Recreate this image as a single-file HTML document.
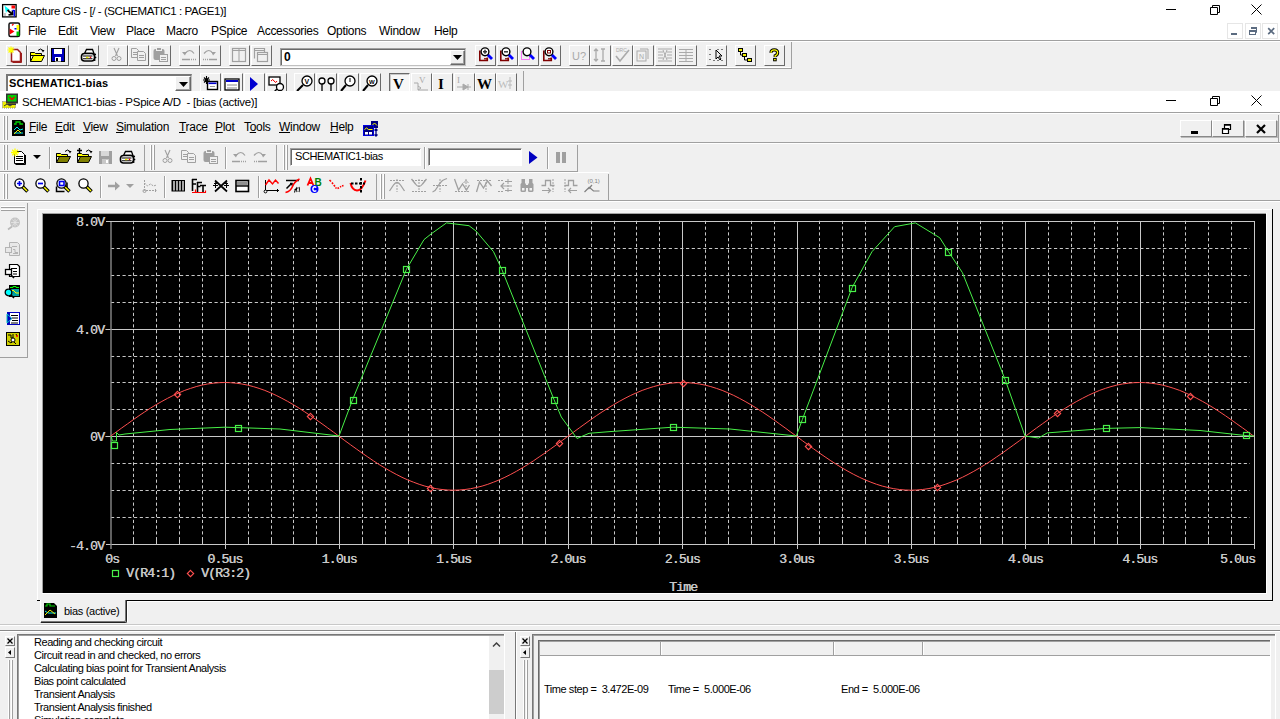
<!DOCTYPE html><html><head><meta charset="utf-8"><style>
*{margin:0;padding:0;box-sizing:border-box}
body{width:1280px;height:719px;overflow:hidden;background:#f0f0f0;position:relative;font-family:"Liberation Sans",sans-serif;font-size:12px;color:#000}
.a{position:absolute}
.t{position:absolute;white-space:pre;line-height:1}
.b{position:absolute;width:21px;height:21px;border-top:1px solid #fff;border-left:1px solid #fff;border-right:1px solid #6a6a6a;border-bottom:1px solid #6a6a6a}
.h{position:absolute;height:1px}
.v{position:absolute;width:1px}
.mono{font-family:"Liberation Mono",monospace}
svg{position:absolute;overflow:visible}
</style></head><body>

<div class="a" style="left:0px;top:0px;width:1280px;height:40px;background:#fff;"></div>
<div class="t" style="left:22px;top:6px;font-size:11.5px;letter-spacing:-0.43px">Capture CIS - [/ - (SCHEMATIC1 : PAGE1)]</div>
<div class="h" style="left:1166px;top:9px;width:10px;background:#000"></div>
<svg style="left:1208px;top:4px" width="12" height="12"><path d="M2.5 3.5h7v7h-7z M4.5 3.5v-2h7v7h-2" fill="none" stroke="#000"/></svg>
<svg style="left:1251px;top:4px" width="11" height="11"><path d="M0.5 0.5L10.5 10.5M10.5 0.5L0.5 10.5" stroke="#000"/></svg>
<svg style="left:2px;top:4px" width="16" height="14"><rect x="0.6" y="0.6" width="13.5" height="12.3" fill="#fff" stroke="#000" stroke-width="1.3"/><path d="M2.5 1.5l5.5 4.5h-2.5l-1.5 3z" fill="#0ff"/><path d="M5.5 6l5 4.5M6.5 10.8l4.2-0.3l-0.3-4" stroke="#000" stroke-width="1.7" fill="none"/><rect x="9.5" y="1.5" width="3.5" height="3" fill="#f00"/><path d="M12.3 6v6.5M10.5 6.5h2" stroke="#00f" stroke-width="1.4"/><rect x="2" y="9" width="2" height="3" fill="#c8c8c8"/></svg>
<svg style="left:8px;top:22px" width="13" height="16"><rect x="1" y="1" width="10.5" height="13.5" rx="1.5" fill="#fff" stroke="#111" stroke-width="1.5"/><path d="M1.7 6.5l4.8 3l-4.8 3z" fill="#f00"/><rect x="8.5" y="3" width="2.8" height="5" fill="#ff0"/><rect x="8.5" y="9.5" width="2.8" height="4.5" fill="#0c0"/><rect x="6.5" y="6" width="2" height="1.5" fill="#00f"/><path d="M4 3.5l1.5-1.5" stroke="#f00" stroke-width="1.2"/></svg>
<div class="t" style="left:28px;top:25px;font-size:12px;letter-spacing:-0.3px">File</div>
<div class="t" style="left:58px;top:25px;font-size:12px;letter-spacing:-0.3px">Edit</div>
<div class="t" style="left:90px;top:25px;font-size:12px;letter-spacing:-0.3px">View</div>
<div class="t" style="left:126px;top:25px;font-size:12px;letter-spacing:-0.3px">Place</div>
<div class="t" style="left:166px;top:25px;font-size:12px;letter-spacing:-0.3px">Macro</div>
<div class="t" style="left:211px;top:25px;font-size:12px;letter-spacing:-0.3px">PSpice</div>
<div class="t" style="left:257px;top:25px;font-size:12px;letter-spacing:-0.3px">Accessories</div>
<div class="t" style="left:327px;top:25px;font-size:12px;letter-spacing:-0.3px">Options</div>
<div class="t" style="left:379px;top:25px;font-size:12px;letter-spacing:-0.3px">Window</div>
<div class="t" style="left:434px;top:25px;font-size:12px;letter-spacing:-0.3px">Help</div>
<div class="a" style="left:1227px;top:23px;width:16px;height:16px;border:1px solid #e6e6e6"></div>
<div class="a" style="left:1245px;top:23px;width:16px;height:16px;border:1px solid #e6e6e6"></div>
<div class="a" style="left:1262px;top:23px;width:16px;height:16px;border:1px solid #e6e6e6"></div>
<div class="a" style="left:1231px;top:33px;width:6px;height:2px;background:#5b6b80;"></div>
<svg style="left:1248px;top:26px" width="10" height="10"><rect x="3" y="1" width="6" height="2" fill="#5b6b80"/><path d="M8.5 3v3.5h-1" fill="none" stroke="#5b6b80"/><rect x="1" y="4" width="7" height="2" fill="#5b6b80"/><rect x="1.5" y="5" width="6" height="3.5" fill="none" stroke="#5b6b80"/></svg>
<svg style="left:1267px;top:27px" width="10" height="10"><path d="M1.2 1.2l6 6M7.2 1.2l-6 6" stroke="#5b6b80" stroke-width="1.7"/></svg>
<div class="h" style="left:0px;top:40px;width:1280px;background:#a0a0a0"></div>
<div class="h" style="left:0px;top:41px;width:1280px;background:#fff"></div>
<div class="h" style="left:0px;top:67px;width:791px;background:#fff"></div>
<div class="h" style="left:0px;top:68px;width:792px;background:#a0a0a0"></div>
<div class="v" style="left:791px;top:42px;height:27px;background:#a0a0a0"></div>
<div class="b" style="left:6px;top:45px;width:21px;height:21px"></div>
<svg style="left:6px;top:45px" width="21" height="21"><path d="M5.5 4.5h6l3 3v9h-9z" fill="#fff" stroke="#9b1c1c" stroke-width="1.5"/><path d="M15.5 8v9.5h-9" stroke="#9b1c1c" fill="none"/><path d="M1.5 5h7M5 1.5v7M2.5 2.5l5 5M7.5 2.5l-5 5" stroke="#ff0" stroke-width="1.2"/></svg>
<div class="b" style="left:27px;top:45px;width:21px;height:21px"></div>
<svg style="left:27px;top:45px" width="21" height="21"><path d="M3.5 7.5h4l1 1h6v2h-11z" fill="#ff0" stroke="#000"/><path d="M3.5 7.5v9" stroke="#000"/><path d="M3.5 16.5l3-6h11l-3 6z" fill="#ff0" stroke="#000"/><path d="M11 5.5q2.5-3 5 0" fill="none" stroke="#000"/><path d="M14.5 5h3l-1.5 2.5z" fill="#000"/></svg>
<div class="b" style="left:48px;top:45px;width:21px;height:21px"></div>
<svg style="left:48px;top:45px" width="21" height="21"><rect x="3.5" y="3.5" width="13" height="13" fill="#0000c0" stroke="#000"/><rect x="6" y="4" width="8" height="5" fill="#fff"/><rect x="7" y="12" width="6" height="4.5" fill="#fff"/><rect x="8" y="13" width="2" height="3" fill="#000"/></svg>
<div class="b" style="left:78px;top:45px;width:21px;height:21px"></div>
<svg style="left:78px;top:45px" width="21" height="21"><path d="M6.5 8.5L8.5 4.5H14.5L16 8.5z" fill="#fff" stroke="#000" stroke-width="1.3"/><rect x="3.5" y="8.5" width="13" height="7.5" rx="3" fill="#fff" stroke="#000" stroke-width="1.6"/><path d="M5 11h9.5M5 13.8h9.5" stroke="#000" stroke-width="1.1"/><rect x="8" y="11.8" width="2.5" height="1.4" fill="#ee0"/><circle cx="12.5" cy="12.4" r="0.8" fill="#e00"/><circle cx="17" cy="9.5" r="1.1" fill="#000"/><circle cx="17.3" cy="12.5" r="1.1" fill="#000"/><circle cx="16.5" cy="15" r="1.1" fill="#000"/></svg>
<div class="b" style="left:107px;top:45px;width:21px;height:21px"></div>
<svg style="left:107px;top:45px" width="21" height="21"><path d="M7 3l3.5 8M12 3l-3.5 8" stroke="#a0a0a0" stroke-width="1.1" fill="none"/><circle cx="7" cy="13.5" r="2" fill="none" stroke="#a0a0a0"/><circle cx="12" cy="13.5" r="2" fill="none" stroke="#a0a0a0"/></svg>
<div class="b" style="left:128px;top:45px;width:21px;height:21px"></div>
<svg style="left:128px;top:45px" width="21" height="21"><path d="M3.5 3.5h5l2 2v7h-7z" fill="#f0f0f0" stroke="#a0a0a0"/><path d="M5 7.5h4M5 9.5h4" stroke="#a0a0a0"/><path d="M9.5 6.5h6l2 2v7h-8z" fill="#f0f0f0" stroke="#a0a0a0"/><path d="M11 10.5h5M11 12.5h5" stroke="#a0a0a0"/></svg>
<div class="b" style="left:150px;top:45px;width:21px;height:21px"></div>
<svg style="left:150px;top:45px" width="21" height="21"><rect x="3.5" y="4" width="11" height="11" rx="2" fill="#a0a0a0"/><rect x="6.5" y="2.5" width="5" height="3" fill="#a0a0a0" stroke="#f0f0f0"/><rect x="9.5" y="9.5" width="8" height="7" fill="#f0f0f0" stroke="#a0a0a0"/><path d="M11 12.5h5M11 14.5h5" stroke="#a0a0a0"/></svg>
<div class="b" style="left:179px;top:45px;width:21px;height:21px"></div>
<svg style="left:179px;top:45px" width="21" height="21"><path d="M6 8.5q5-6 9 0" fill="none" stroke="#a0a0a0" stroke-width="1.2"/><path d="M3 7l4.5 0l-1.5 3.5z" fill="#a0a0a0"/><path d="M3 14.5h8M12 14.5h1M14 14.5h1M16 14.5h1" stroke="#a0a0a0" stroke-width="1.6"/></svg>
<div class="b" style="left:200px;top:45px;width:21px;height:21px"></div>
<svg style="left:200px;top:45px" width="21" height="21"><path d="M4 8.5q5-6 9 0" fill="none" stroke="#a0a0a0" stroke-width="1.2"/><path d="M16 7l-4.5 0l1.5 3.5z" fill="#a0a0a0"/><path d="M9 14.5h8M3 14.5h1M5 14.5h1M7 14.5h1" stroke="#a0a0a0" stroke-width="1.6"/></svg>
<div class="b" style="left:229px;top:45px;width:21px;height:21px"></div>
<svg style="left:229px;top:45px" width="21" height="21"><rect x="3.5" y="3.5" width="13" height="13" fill="none" stroke="#a0a0a0" stroke-width="1.2"/><path d="M10 4v12M4 5.5h12" stroke="#a0a0a0"/></svg>
<div class="b" style="left:251px;top:45px;width:21px;height:21px"></div>
<svg style="left:251px;top:45px" width="21" height="21"><rect x="6.5" y="7.5" width="10" height="9" fill="#f0f0f0" stroke="#a0a0a0" stroke-width="1.2"/><path d="M3.5 13.5v-10h10v4" fill="none" stroke="#a0a0a0" stroke-width="1.2"/><path d="M4 5.5h9M7 9.5h9" stroke="#a0a0a0"/></svg>
<div class="b" style="left:475px;top:45px;width:21px;height:21px"></div>
<svg style="left:476px;top:45px" width="21" height="21"><path d="M3.8 5.5v10h7.5v-3" fill="none" stroke="#800000" stroke-width="1.6"/><path d="M8 13.8h3" stroke="#800000" stroke-width="1.3"/><path d="M11.5 9.5l4.5 4.5" stroke="#0000ff" stroke-width="2.8"/><circle cx="9" cy="6.8" r="3.9" fill="#fff" stroke="#000" stroke-width="1.4"/><path d="M7 6.8h4M9 4.8v4" stroke="#333" stroke-width="1.5"/></svg>
<div class="b" style="left:497px;top:45px;width:21px;height:21px"></div>
<svg style="left:497px;top:45px" width="21" height="21"><path d="M3.8 5.5v10h7.5v-3" fill="none" stroke="#800000" stroke-width="1.6"/><path d="M8 13.8h3" stroke="#800000" stroke-width="1.3"/><path d="M11.5 9.5l4.5 4.5" stroke="#0000ff" stroke-width="2.8"/><circle cx="9" cy="6.8" r="3.9" fill="#fff" stroke="#000" stroke-width="1.4"/><path d="M7 6.8h4" stroke="#333" stroke-width="1.5"/></svg>
<div class="b" style="left:518px;top:45px;width:21px;height:21px"></div>
<svg style="left:518px;top:45px" width="21" height="21"><rect x="3.5" y="6.5" width="8" height="8" fill="none" stroke="#f0f" stroke-dasharray="1 1"/><path d="M11.5 9.5l4.5 4.5" stroke="#0000ff" stroke-width="2.8"/><circle cx="9" cy="6.8" r="3.9" fill="#fff" stroke="#000" stroke-width="1.4"/></svg>
<div class="b" style="left:540px;top:45px;width:21px;height:21px"></div>
<svg style="left:540px;top:45px" width="21" height="21"><path d="M3.8 5.5v10h7.5v-3" fill="none" stroke="#800000" stroke-width="1.6"/><path d="M8 13.8h3" stroke="#800000" stroke-width="1.3"/><path d="M11.5 9.5l4.5 4.5" stroke="#0000ff" stroke-width="2.8"/><circle cx="9" cy="6.8" r="3.9" fill="#fff" stroke="#000" stroke-width="1.4"/><rect x="7.5" y="5.5" width="3" height="2.5" fill="none" stroke="#800000"/></svg>
<div class="b" style="left:569px;top:45px;width:21px;height:21px"></div>
<svg style="left:569px;top:45px" width="21" height="21"><text x="3" y="15" font-family="Liberation Sans" font-size="11" fill="#aaa">U?</text></svg>
<div class="b" style="left:590px;top:45px;width:21px;height:21px"></div>
<svg style="left:590px;top:45px" width="21" height="21"><path d="M6 4v12M4 6l2-2l2 2M4 14l2 2l2-2M11 4h4M13 4v12M11 16h4" fill="none" stroke="#aaa" stroke-width="1.3"/></svg>
<div class="b" style="left:612px;top:45px;width:21px;height:21px"></div>
<svg style="left:612px;top:45px" width="21" height="21"><path d="M4 11l4 5l9-11" fill="none" stroke="#aaa" stroke-width="1.6"/><text x="4" y="7" font-size="5" fill="#aaa">DRC</text></svg>
<div class="b" style="left:633px;top:45px;width:21px;height:21px"></div>
<svg style="left:633px;top:45px" width="21" height="21"><rect x="4" y="6" width="9" height="10" fill="none" stroke="#aaa"/><path d="M7 4h8v10" fill="none" stroke="#aaa"/><text x="6" y="14" font-size="7" fill="#aaa">N</text></svg>
<div class="b" style="left:655px;top:45px;width:21px;height:21px"></div>
<svg style="left:655px;top:45px" width="21" height="21"><path d="M3 4h14M3 7h5M12 7h5M3 10h5M12 10h5M3 13h5M12 13h5M3 16h14M8 5l4 10M12 5l-4 10" stroke="#aaa"/></svg>
<div class="b" style="left:676px;top:45px;width:21px;height:21px"></div>
<svg style="left:676px;top:45px" width="21" height="21"><path d="M3 4.5h14M3 7.5h14M3 10.5h14M3 13.5h14M3 16.5h14M10 4v13" stroke="#aaa"/></svg>
<div class="b" style="left:706px;top:45px;width:21px;height:21px"></div>
<svg style="left:706px;top:45px" width="21" height="21"><path d="M4 4v1M4 9v1M4 14v1M8 15v1M12 15v1M16 15v1M12 4v1M16 4v1" stroke="#000"/><path d="M10 5v9l2-2l2 3l1-1l-2-3h3z" fill="#f0f0f0" stroke="#000"/></svg>
<div class="b" style="left:735px;top:45px;width:21px;height:21px"></div>
<svg style="left:735px;top:45px" width="21" height="21"><rect x="3.5" y="3.5" width="4" height="3" fill="#ee0" stroke="#000"/><rect x="7.5" y="8.5" width="4" height="3" fill="#ee0" stroke="#000"/><rect x="12.5" y="13.5" width="4" height="3" fill="#ee0" stroke="#000"/><path d="M5.5 6.5v3.5h2M9.5 11.5v3.5h3" fill="none" stroke="#000"/></svg>
<div class="b" style="left:764px;top:45px;width:21px;height:21px"></div>
<svg style="left:764px;top:45px" width="21" height="21"><path d="M7 7.8q0-3 3.3-3q3.3 0 3.3 3q0 2-2.4 3v1.2" fill="none" stroke="#000" stroke-width="3.2"/><path d="M7 7.8q0-3 3.3-3q3.3 0 3.3 3q0 2-2.4 3v1.2" fill="none" stroke="#ff0" stroke-width="1.3"/><rect x="9.6" y="13.4" width="2.6" height="2.4" fill="#ff0" stroke="#000"/></svg>
<div class="a" style="left:280px;top:48px;width:186px;height:18px;background:#fff;border-top:1px solid #a0a0a0;border-left:1px solid #a0a0a0;border-right:1px solid #c0c0c0;border-bottom:1px solid #c0c0c0;box-shadow:inset 1px 1px 0 #696969"></div>
<div class="t" style="left:284px;top:51px;font-weight:bold;font-size:12px">0</div>
<div class="a" style="left:450px;top:50px;width:15px;height:15px;background:#f0f0f0;border-top:1px solid #fff;border-left:1px solid #fff;border-right:1px solid #696969;border-bottom:1px solid #696969;box-shadow:inset -1px -1px 0 #a0a0a0"></div>
<svg style="left:453px;top:55px" width="9" height="5"><path d="M0 0h9l-4.5 5z" fill="#000"/></svg>
<div class="a" style="left:6px;top:74px;width:186px;height:20px;background:#fff;border-top:2px solid #777;border-left:2px solid #777;border-right:1px solid #c0c0c0"></div>
<div class="t" style="left:9px;top:78px;font-weight:bold;font-size:11px;letter-spacing:0.2px">SCHEMATIC1-bias</div>
<div class="a" style="left:175px;top:76px;width:16px;height:15px;background:#f0f0f0;border-top:1px solid #fff;border-left:1px solid #fff;border-right:1px solid #696969;border-bottom:1px solid #696969;box-shadow:inset -1px -1px 0 #a0a0a0"></div>
<svg style="left:179px;top:82px" width="9" height="5"><path d="M0 0h9l-4.5 5z" fill="#000"/></svg>
<div class="b" style="left:200px;top:73px;width:21px;height:21px"></div>
<svg style="left:200px;top:73px" width="21" height="21"><path d="M4 4.5l5 5M9 4.5l-5 5M6.5 3v8M3 7h7" stroke="#000" stroke-width="1.1"/><rect x="7.5" y="8.5" width="10" height="8" fill="#fff" stroke="#000" stroke-width="1.4"/><rect x="8.5" y="9.5" width="8" height="1.6" fill="#00c"/><path d="M10 13.5h5" stroke="#999"/></svg>
<div class="b" style="left:222px;top:73px;width:21px;height:21px"></div>
<svg style="left:222px;top:73px" width="21" height="21"><rect x="3" y="6" width="14" height="11" fill="#fff" stroke="#000" stroke-width="1.3"/><rect x="4" y="7" width="12" height="2" fill="#00c"/><path d="M5 12h10M5 15h10" stroke="#888"/></svg>
<div class="b" style="left:244px;top:73px;width:21px;height:21px"></div>
<svg style="left:244px;top:73px" width="21" height="21"><path d="M6 4l8 7l-8 7z" fill="#0000d0"/></svg>
<div class="b" style="left:266px;top:73px;width:21px;height:21px"></div>
<svg style="left:266px;top:73px" width="21" height="21"><rect x="3" y="4" width="11" height="8" fill="#fff" stroke="#000" stroke-width="1.3"/><path d="M5 8q2-3 3 0q2 3 3 0" fill="none" stroke="#e00"/><circle cx="14" cy="14" r="3.5" fill="#fff" stroke="#000" stroke-width="1.3"/><path d="M11 16l-3 3" stroke="#000" stroke-width="1.5"/></svg>
<div class="b" style="left:294px;top:73px;width:21px;height:21px"></div>
<svg style="left:294px;top:73px" width="21" height="21"><circle cx="13" cy="8" r="5" fill="#fff" stroke="#000" stroke-width="1.3"/><text x="10.5" y="11" font-size="7" font-weight="bold">V</text><path d="M9 12l-6 6" stroke="#000" stroke-width="2"/></svg>
<div class="b" style="left:316px;top:73px;width:21px;height:21px"></div>
<svg style="left:316px;top:73px" width="21" height="21"><circle cx="6" cy="8" r="3" fill="#fff" stroke="#000" stroke-width="1.3"/><circle cx="15" cy="8" r="3" fill="#fff" stroke="#000" stroke-width="1.3"/><path d="M6 11v7M15 11v7" stroke="#000" stroke-width="1.3"/></svg>
<div class="b" style="left:338px;top:73px;width:21px;height:21px"></div>
<svg style="left:338px;top:73px" width="21" height="21"><circle cx="12" cy="8" r="5" fill="#fff" stroke="#000" stroke-width="1.3"/><path d="M8 12l-5 6" stroke="#000" stroke-width="2"/><path d="M12 5v4" stroke="#000"/></svg>
<div class="b" style="left:360px;top:73px;width:21px;height:21px"></div>
<svg style="left:360px;top:73px" width="21" height="21"><circle cx="12" cy="8" r="5" fill="#fff" stroke="#000" stroke-width="1.3"/><text x="9" y="11" font-size="6" font-weight="bold">W</text><path d="M8 12l-5 6" stroke="#000" stroke-width="2"/></svg>
<div class="a" style="left:389px;top:73px;width:21px;height:21px;background:#f7f7f7;border-top:1px solid #6a6a6a;border-left:1px solid #6a6a6a;border-right:1px solid #fff;border-bottom:1px solid #fff;box-shadow:inset 1px 1px 0 #c8c8c8"></div>
<svg style="left:389px;top:73px" width="21" height="21"><text x="4" y="15.5" font-family="Liberation Serif" font-weight="bold" font-size="15">V</text></svg>
<div class="b" style="left:411px;top:73px;width:21px;height:21px"></div>
<svg style="left:411px;top:73px" width="21" height="21"><text x="8" y="10" font-family="Liberation Serif" font-size="9" fill="#aaa">V</text><path d="M3 10h4v7h10M7 13l3 2l-3 2" fill="none" stroke="#aaa"/></svg>
<div class="b" style="left:432px;top:73px;width:21px;height:21px"></div>
<svg style="left:432px;top:73px" width="21" height="21"><text x="6" y="15.5" font-family="Liberation Serif" font-weight="bold" font-size="15">I</text></svg>
<div class="b" style="left:454px;top:73px;width:21px;height:21px"></div>
<svg style="left:454px;top:73px" width="21" height="21"><text x="3" y="10" font-family="Liberation Serif" font-size="9" fill="#aaa">I</text><path d="M3 14h14M9 11l5 3l-5 3zM14 11v6" fill="#aaa" stroke="#aaa"/></svg>
<div class="b" style="left:475px;top:73px;width:21px;height:21px"></div>
<svg style="left:475px;top:73px" width="21" height="21"><text x="2" y="15.5" font-family="Liberation Serif" font-weight="bold" font-size="15">W</text></svg>
<div class="b" style="left:496px;top:73px;width:21px;height:21px"></div>
<svg style="left:496px;top:73px" width="21" height="21"><text x="2" y="15" font-family="Liberation Serif" font-size="11" fill="#bbb">W</text><path d="M14 4v12M12 8h4M12 12h4" stroke="#bbb"/></svg>
<div class="v" style="left:523px;top:71px;height:20px;background:#a0a0a0"></div>
<div class="a" style="left:0px;top:91px;width:1280px;height:21px;background:#fff;"></div>
<svg style="left:2px;top:93px" width="17" height="17"><path d="M0.5 8.5h13v6.5h-13z" fill="#ee0" stroke="#888" stroke-dasharray="1 1"/><path d="M2 13l3-2l3 2l3-2" stroke="#333" fill="none"/><rect x="4" y="0.5" width="12" height="10" fill="#333"/><rect x="5.5" y="2" width="9" height="6.5" fill="#0c0"/><path d="M7.5 4l2.5 2.5l2.5-2.5" stroke="#e00" stroke-width="1.3" fill="none"/><rect x="6" y="10.5" width="8" height="1.5" fill="#333"/></svg>
<div class="t" style="left:22px;top:97px;font-size:11.5px;letter-spacing:-0.28px">SCHEMATIC1-bias - PSpice A/D  - [bias (active)]</div>
<div class="h" style="left:1166px;top:100px;width:10px;background:#000"></div>
<svg style="left:1208px;top:95px" width="12" height="12"><path d="M2.5 3.5h7v7h-7z M4.5 3.5v-2h7v7h-2" fill="none" stroke="#000"/></svg>
<svg style="left:1251px;top:95px" width="11" height="11"><path d="M0.5 0.5L10.5 10.5M10.5 0.5L0.5 10.5" stroke="#000"/></svg>
<div class="h" style="left:0px;top:112px;width:1280px;background:#a0a0a0"></div>
<div class="h" style="left:0px;top:113px;width:1280px;background:#fff"></div>
<div class="v" style="left:3px;top:116px;height:24px;background:#fff"></div>
<div class="v" style="left:4px;top:116px;height:24px;background:#a0a0a0"></div>
<div class="v" style="left:6px;top:116px;height:24px;background:#fff"></div>
<div class="v" style="left:7px;top:116px;height:24px;background:#a0a0a0"></div>
<svg style="left:11px;top:119px" width="16" height="18"><path d="M1 1h10l3 3v13h-13z" fill="#000"/><path d="M3 5h2v-2h4v2h3" stroke="#0c0" fill="none" stroke-width="1.3"/><path d="M3 11l3-3l3 3l3-1M3 14h9" stroke="#0ee" fill="none"/><path d="M3 15l4-4l3 3" stroke="#ee0" fill="none"/></svg>
<div class="t" style="left:29px;top:121px;font-size:12px;letter-spacing:-0.3px"><u>F</u>ile</div>
<div class="t" style="left:55px;top:121px;font-size:12px;letter-spacing:-0.3px"><u>E</u>dit</div>
<div class="t" style="left:83px;top:121px;font-size:12px;letter-spacing:-0.3px"><u>V</u>iew</div>
<div class="t" style="left:116px;top:121px;font-size:12px;letter-spacing:-0.3px"><u>S</u>imulation</div>
<div class="t" style="left:179px;top:121px;font-size:12px;letter-spacing:-0.3px"><u>T</u>race</div>
<div class="t" style="left:215px;top:121px;font-size:12px;letter-spacing:-0.3px"><u>P</u>lot</div>
<div class="t" style="left:244px;top:121px;font-size:12px;letter-spacing:-0.3px">T<u>o</u>ols</div>
<div class="t" style="left:279px;top:121px;font-size:12px;letter-spacing:-0.3px"><u>W</u>indow</div>
<div class="t" style="left:330px;top:121px;font-size:12px;letter-spacing:-0.3px"><u>H</u>elp</div>
<svg style="left:362px;top:121px" width="17" height="17"><rect x="9" y="0" width="7" height="7" fill="#000080"/><path d="M10 4.5l2.5-2.5L15 4.5" stroke="#ff0" fill="none"/><rect x="1.5" y="4.5" width="10" height="10" fill="#000080" stroke="#0000e0"/><path d="M2.5 8.5l2-1.5l2 1.5h4" stroke="#ff0" fill="none"/><rect x="3" y="11" width="3" height="2.5" fill="#fff"/><rect x="7" y="11" width="3" height="2.5" fill="#fff"/><path d="M14 8v7M12.5 9.5l1.5-1.5l1.5 1.5M12.5 13.5l1.5 1.5l1.5-1.5" stroke="#000080" fill="none" stroke-width="1.3"/></svg>
<div class="a" style="left:1180px;top:120px;width:32px;height:17px;border-top:1px solid #fff;border-left:1px solid #fff;border-right:1px solid #888;border-bottom:1px solid #888;box-shadow:1px 1px 0 #bbb"></div>
<div class="a" style="left:1212px;top:120px;width:32px;height:17px;border-top:1px solid #fff;border-left:1px solid #fff;border-right:1px solid #888;border-bottom:1px solid #888;box-shadow:1px 1px 0 #bbb"></div>
<div class="a" style="left:1245px;top:120px;width:32px;height:17px;border-top:1px solid #fff;border-left:1px solid #fff;border-right:1px solid #888;border-bottom:1px solid #888;box-shadow:1px 1px 0 #bbb"></div>
<div class="a" style="left:1191px;top:131px;width:7px;height:3px;background:#000;"></div>
<svg style="left:1221px;top:122px" width="12" height="12"><path d="M1.5 6.5h6v5h-6z M3.5 6.5v-4h6v5h-2" fill="#fff" stroke="#000" stroke-width="1.2"/><path d="M3 3h7M1 7h7" stroke="#000" stroke-width="1.5"/></svg>
<svg style="left:1256px;top:124px" width="10" height="10"><path d="M1 1l8 8M9 1l-8 8" stroke="#000" stroke-width="2.2"/></svg>
<div class="v" style="left:1278px;top:115px;height:27px;background:#a0a0a0"></div>
<div class="h" style="left:0px;top:142px;width:1280px;background:#a0a0a0"></div>
<div class="h" style="left:0px;top:143px;width:1280px;background:#fff"></div>
<div class="v" style="left:3px;top:145px;height:25px;background:#fff"></div>
<div class="v" style="left:4px;top:145px;height:25px;background:#a0a0a0"></div>
<div class="v" style="left:6px;top:145px;height:25px;background:#fff"></div>
<div class="v" style="left:7px;top:145px;height:25px;background:#a0a0a0"></div>
<svg style="left:11px;top:148px" width="20" height="20"><path d="M3.5 3.5h7l3 3v9h-10z" fill="#fff" stroke="#000"/><path d="M14.5 7v9.5h-10" stroke="#000" fill="none"/><path d="M5 8.5h7M5 10.5h7M5 12.5h7" stroke="#000"/><path d="M0 4.5h8M4 0.5v8M1.2 1.7l5.6 5.6M6.8 1.7l-5.6 5.6" stroke="#ff0" stroke-width="1.3"/></svg>
<svg style="left:56px;top:148px" width="20" height="20"><path d="M0.5 5.5h4l1 1h6v2h-11z" fill="#ff0" stroke="#000"/><path d="M0.5 5.5v9" stroke="#000"/><path d="M0.5 14.5l3-6h11l-3 6z" fill="#808000" stroke="#000"/><path d="M9 3.5q2.5-3 5 0" fill="none" stroke="#000"/><path d="M12.5 3h3l-1.5 2.5z" fill="#000"/></svg>
<svg style="left:77px;top:148px" width="20" height="20"><path d="M0.5 5.5h4l1 1h6v2h-11z" fill="#ff0" stroke="#000"/><path d="M0.5 5.5v9" stroke="#000"/><path d="M0.5 14.5l3-6h11l-3 6z" fill="#808000" stroke="#000"/><path d="M9 3.5q2.5-3 5 0" fill="none" stroke="#000"/><path d="M12.5 3h3l-1.5 2.5z" fill="#000"/><path d="M0 2.5h5M2.5 0v5" stroke="#000" stroke-width="1.4"/></svg>
<svg style="left:98px;top:148px" width="20" height="20"><rect x="1" y="3" width="13" height="13" fill="#a0a0a0"/><rect x="3" y="3" width="8" height="5" fill="#d8d8d8"/><rect x="4" y="11" width="7" height="5" fill="#c8c8c8"/><rect x="8" y="12" width="2" height="3" fill="#fff"/></svg>
<svg style="left:118px;top:148px" width="20" height="20"><path d="M5.5 7.5L7.5 3.5H13.5L15 7.5z" fill="#fff" stroke="#000" stroke-width="1.3"/><rect x="2.5" y="7.5" width="13" height="7.5" rx="3" fill="#fff" stroke="#000" stroke-width="1.6"/><path d="M4 10h9.5M4 12.8h9.5" stroke="#000" stroke-width="1.1"/><rect x="7" y="10.8" width="2.5" height="1.4" fill="#ee0"/><circle cx="11.5" cy="11.4" r="0.8" fill="#e00"/><circle cx="16" cy="8.5" r="1.1" fill="#000"/><circle cx="16.3" cy="11.5" r="1.1" fill="#000"/><circle cx="15.5" cy="14" r="1.1" fill="#000"/></svg>
<svg style="left:162px;top:148px" width="20" height="20"><path d="M3 2l3.5 8M8 2l-3.5 8" stroke="#a0a0a0" stroke-width="1.1" fill="none"/><circle cx="3" cy="12.5" r="2" fill="none" stroke="#a0a0a0"/><circle cx="8" cy="12.5" r="2" fill="none" stroke="#a0a0a0"/></svg>
<svg style="left:181px;top:148px" width="20" height="20"><path d="M0.5 2.5h5l2 2v7h-7z" fill="#f0f0f0" stroke="#a0a0a0"/><path d="M2 6.5h4M2 8.5h4" stroke="#a0a0a0"/><path d="M6.5 5.5h6l2 2v7h-8z" fill="#f0f0f0" stroke="#a0a0a0"/><path d="M8 9.5h5M8 11.5h5" stroke="#a0a0a0"/></svg>
<svg style="left:203px;top:148px" width="20" height="20"><rect x="0.5" y="3" width="11" height="11" rx="2" fill="#a0a0a0"/><rect x="3.5" y="1.5" width="5" height="3" fill="#a0a0a0" stroke="#f0f0f0"/><rect x="6.5" y="8.5" width="8" height="7" fill="#f0f0f0" stroke="#a0a0a0"/><path d="M8 11.5h5M8 13.5h5" stroke="#a0a0a0"/></svg>
<svg style="left:231px;top:148px" width="20" height="20"><path d="M5 7.5q5-6 9 0" fill="none" stroke="#a0a0a0" stroke-width="1.2"/><path d="M2 6l4.5 0l-1.5 3.5z" fill="#a0a0a0"/><path d="M1 13.5h8M10 13.5h1M12 13.5h1M14 13.5h1" stroke="#a0a0a0" stroke-width="1.6"/></svg>
<svg style="left:253px;top:148px" width="20" height="20"><path d="M1 7.5q5-6 9 0" fill="none" stroke="#a0a0a0" stroke-width="1.2"/><path d="M13 6l-4.5 0l1.5 3.5z" fill="#a0a0a0"/><path d="M6 13.5h8M1 13.5h1M3 13.5h1M5 13.5h1" stroke="#a0a0a0" stroke-width="1.6"/></svg>
<svg style="left:33px;top:155px" width="8" height="4"><path d="M0 0h8l-4 4z" fill="#000"/></svg>
<div class="v" style="left:49px;top:147px;height:22px;background:#a0a0a0"></div>
<div class="v" style="left:50px;top:147px;height:22px;background:#fff"></div>
<div class="v" style="left:225px;top:147px;height:22px;background:#a0a0a0"></div>
<div class="v" style="left:226px;top:147px;height:22px;background:#fff"></div>
<div class="v" style="left:144px;top:145px;height:26px;background:#a0a0a0"></div>
<div class="v" style="left:276px;top:145px;height:26px;background:#a0a0a0"></div>
<div class="v" style="left:577px;top:145px;height:26px;background:#a0a0a0"></div>
<div class="h" style="left:0px;top:171px;width:578px;background:#a0a0a0"></div>
<div class="v" style="left:150px;top:145px;height:25px;background:#fff"></div>
<div class="v" style="left:151px;top:145px;height:25px;background:#a0a0a0"></div>
<div class="v" style="left:153px;top:145px;height:25px;background:#fff"></div>
<div class="v" style="left:154px;top:145px;height:25px;background:#a0a0a0"></div>
<div class="v" style="left:283px;top:145px;height:25px;background:#fff"></div>
<div class="v" style="left:284px;top:145px;height:25px;background:#a0a0a0"></div>
<div class="v" style="left:286px;top:145px;height:25px;background:#fff"></div>
<div class="v" style="left:287px;top:145px;height:25px;background:#a0a0a0"></div>
<div class="a" style="left:290px;top:148px;width:131px;height:18px;background:#fff;border-top:1px solid #a0a0a0;border-left:1px solid #a0a0a0;border-right:1px solid #fff;border-bottom:1px solid #fff;box-shadow:inset 1px 1px 0 #696969"></div>
<div class="t" style="left:295px;top:151px;font-size:11px;letter-spacing:-0.4px">SCHEMATIC1-bias</div>
<div class="v" style="left:424px;top:147px;height:22px;background:#a0a0a0"></div>
<div class="v" style="left:425px;top:147px;height:22px;background:#fff"></div>
<div class="a" style="left:428px;top:148px;width:94px;height:18px;background:#fff;border-top:1px solid #a0a0a0;border-left:1px solid #a0a0a0;border-right:1px solid #fff;border-bottom:1px solid #fff;box-shadow:inset 1px 1px 0 #696969"></div>
<svg style="left:529px;top:151px" width="9" height="13"><path d="M0 0l8.5 6.5l-8.5 6.5z" fill="#0000c0"/></svg>
<div class="v" style="left:547px;top:147px;height:22px;background:#a0a0a0"></div>
<div class="v" style="left:548px;top:147px;height:22px;background:#fff"></div>
<div class="a" style="left:556px;top:152px;width:4px;height:11px;background:#a0a0a0;"></div>
<div class="a" style="left:562px;top:152px;width:4px;height:11px;background:#a0a0a0;"></div>
<div class="h" style="left:0px;top:172px;width:609px;background:#fff"></div>
<div class="v" style="left:3px;top:174px;height:25px;background:#fff"></div>
<div class="v" style="left:4px;top:174px;height:25px;background:#a0a0a0"></div>
<div class="v" style="left:6px;top:174px;height:25px;background:#fff"></div>
<div class="v" style="left:7px;top:174px;height:25px;background:#a0a0a0"></div>
<svg style="left:13px;top:177px" width="18" height="18"><path d="M9.5 9.5l5 5" stroke="#000" stroke-width="3.6"/><path d="M10 10l4 4" stroke="#ff0" stroke-width="1.5"/><circle cx="6.5" cy="6.5" r="4.6" fill="#fff" stroke="#000" stroke-width="1.3"/><path d="M4 6.5h5M6.5 4v5" stroke="#00e" stroke-width="1.7"/></svg>
<svg style="left:34px;top:177px" width="18" height="18"><path d="M9.5 9.5l5 5" stroke="#000" stroke-width="3.6"/><path d="M10 10l4 4" stroke="#ff0" stroke-width="1.5"/><circle cx="6.5" cy="6.5" r="4.6" fill="#fff" stroke="#000" stroke-width="1.3"/><path d="M4 6.5h5" stroke="#00e" stroke-width="1.7"/></svg>
<svg style="left:55px;top:177px" width="18" height="18"><path d="M1.5 9.5v5h8" fill="none" stroke="#000" stroke-width="1.5"/><path d="M12 5.5v6" stroke="#000" stroke-width="1.5"/><path d="M9.5 9.5l5 5" stroke="#000" stroke-width="3.6"/><path d="M10 10l4 4" stroke="#ff0" stroke-width="1.5"/><circle cx="6.5" cy="6.5" r="4.6" fill="#fff" stroke="#000" stroke-width="1.3"/><rect x="4.5" y="4.5" width="4.5" height="4" fill="#fff" stroke="#00e" stroke-width="1.6"/></svg>
<svg style="left:77px;top:177px" width="18" height="18"><path d="M9.5 9.5l5 5" stroke="#000" stroke-width="3.6"/><path d="M10 10l4 4" stroke="#ff0" stroke-width="1.5"/><circle cx="6.5" cy="6.5" r="4.6" fill="#fff" stroke="#000" stroke-width="1.3"/></svg>
<svg style="left:107px;top:177px" width="18" height="18"><path d="M1 9h9" stroke="#a0a0a0" stroke-width="2.5"/><path d="M8 4.5l5 4.5l-5 4.5z" fill="#a0a0a0"/></svg>
<svg style="left:142px;top:177px" width="18" height="18"><path d="M2.5 3v10.5h12M2.5 6l3 3l3-2l3 2l3-1" fill="none" stroke="#a0a0a0" stroke-dasharray="2 1"/><circle cx="2.5" cy="14" r="1.5" fill="none" stroke="#a0a0a0"/><path d="M13.5 12v3" stroke="#a0a0a0"/></svg>
<svg style="left:171px;top:177px" width="18" height="18"><rect x="0.5" y="3" width="13.5" height="11.5" fill="#000"/><path d="M3 4v9.5M6 4v9.5M9 4v9.5M12 4v9.5" stroke="#fff" stroke-width="1.3"/></svg>
<svg style="left:191px;top:177px" width="18" height="18"><path d="M1 2.5h5M1.5 2v12M1.5 7h3.5M6 5.5h5M6.5 5v10M6.5 9.5h3M9 8.5h6M12 8v7" stroke="#000" stroke-width="1.6" fill="none"/><path d="M1 15.5h4M4.5 15.5v-3M4 15.5h11M14.5 15.5v-2" stroke="#ff0000" stroke-width="1.2" fill="none"/></svg>
<svg style="left:213px;top:177px" width="18" height="18"><path d="M2 3.5l12 11M14 3.5l-12 11" stroke="#000" stroke-width="1.7"/><path d="M0 8.5h5M11 8.5h5M2.5 6v5M13.5 6v5M1 7l1.5-1.5L4 7M12 7l1.5-1.5L15 7" stroke="#000" fill="none"/></svg>
<svg style="left:235px;top:177px" width="18" height="18"><rect x="1" y="3.5" width="12.5" height="11" fill="#fff" stroke="#000" stroke-width="1.6"/><rect x="2" y="4.5" width="10.5" height="4" fill="#909090"/><path d="M1 9h12.5" stroke="#000" stroke-width="1.4"/></svg>
<svg style="left:263px;top:177px" width="18" height="18"><path d="M2.5 3v12M1 13.5h15M14.5 12v3" stroke="#000" fill="none"/><circle cx="2.5" cy="14.5" r="1.4" fill="#fff" stroke="#000"/><path d="M2.5 8l3.5-5l3.5 4l3-4l3 3.5" fill="none" stroke="#f00" stroke-width="1.4"/></svg>
<svg style="left:285px;top:177px" width="18" height="18"><path d="M1 3.5h13" stroke="#000" stroke-width="1.5"/><path d="M1.5 11.5l5-5M5 6.5h2v2" stroke="#000" stroke-width="1.5" fill="none"/><path d="M0.5 15.5q5-1 7-6t7-7.5" fill="none" stroke="#f00" stroke-width="1.6"/><path d="M9.5 15.5q1-5 3-4M9.5 12.5h2M12 10q-1 2.5 0 5M14 10q1 2.5 0 5" fill="none" stroke="#000" stroke-width="1.1"/></svg>
<svg style="left:307px;top:177px" width="18" height="18"><path d="M0.5 8.5l3-7l3 7M1.5 6h4" fill="none" stroke="#f00" stroke-width="1.8"/><text x="7.5" y="8.5" font-family="Liberation Sans" font-weight="bold" font-size="10" fill="#008000">B</text><circle cx="7.5" cy="12" r="4" fill="#00f"/><path d="M9.3 10.5q-1.8-1.5-3 0q-1 1.5 0 3q1.2 1.5 3 0" fill="none" stroke="#fff" stroke-width="1.4"/></svg>
<svg style="left:329px;top:177px" width="18" height="18"><path d="M0.5 3l1.5 1.5M3 5.5l1 1.5M4.8 8l1.2 1.5M6.5 10.5l1 1M8.5 11.5l1.5-0.8M11 10l1.2-0.6M13 9l1.5-0.5" stroke="#f00" stroke-width="1.6"/></svg>
<svg style="left:350px;top:177px" width="18" height="18"><path d="M0.5 6q1.5 7 6.5 7.5q5 0 8.5-10" fill="none" stroke="#f00" stroke-width="2"/><path d="M1 6.5h14" stroke="#000" stroke-width="2" stroke-dasharray="2.5 1.5"/><path d="M11 1v15" stroke="#000" stroke-width="2" stroke-dasharray="2.5 1.5"/></svg>
<svg style="left:126px;top:184px" width="8" height="4"><path d="M0 0h8l-4 4z" fill="#a0a0a0"/></svg>
<div class="v" style="left:100px;top:176px;height:22px;background:#a0a0a0"></div>
<div class="v" style="left:101px;top:176px;height:22px;background:#fff"></div>
<div class="v" style="left:164px;top:176px;height:22px;background:#a0a0a0"></div>
<div class="v" style="left:165px;top:176px;height:22px;background:#fff"></div>
<div class="v" style="left:258px;top:176px;height:22px;background:#a0a0a0"></div>
<div class="v" style="left:259px;top:176px;height:22px;background:#fff"></div>
<div class="v" style="left:376px;top:174px;height:26px;background:#a0a0a0"></div>
<div class="v" style="left:380px;top:174px;height:25px;background:#fff"></div>
<div class="v" style="left:381px;top:174px;height:25px;background:#a0a0a0"></div>
<div class="v" style="left:383px;top:174px;height:25px;background:#fff"></div>
<div class="v" style="left:384px;top:174px;height:25px;background:#a0a0a0"></div>
<svg style="left:389px;top:177px" width="18" height="18"><path d="M1 3.5h14" stroke="#a0a0a0" fill="none" stroke-dasharray="2 1"/><path d="M8 2v13" stroke="#a0a0a0" fill="none" stroke-dasharray="2 1"/><path d="M0.5 14l4-6q3.5-5 7 0l4 6" stroke="#a0a0a0" fill="none" stroke-width="1.3"/></svg>
<svg style="left:411px;top:177px" width="18" height="18"><path d="M1 3.5h14M1 14.5h14" stroke="#a0a0a0" fill="none" stroke-dasharray="2 1"/><path d="M8 2v13" stroke="#a0a0a0" fill="none" stroke-dasharray="2 1"/><path d="M0.5 2l4 5q3.5 5 7 0l4-5" stroke="#a0a0a0" fill="none" stroke-width="1.3"/></svg>
<svg style="left:432px;top:177px" width="18" height="18"><path d="M1 8.5h14" stroke="#a0a0a0" fill="none" stroke-dasharray="2 1"/><path d="M8 2v13" stroke="#a0a0a0" fill="none" stroke-dasharray="2 1"/><path d="M0.5 15q3-1 5-5t5-6.5q3-1.5 4.5-2" stroke="#a0a0a0" fill="none" stroke-width="1.3"/></svg>
<svg style="left:454px;top:177px" width="18" height="18"><path d="M1 14.5h14" stroke="#a0a0a0" fill="none" stroke-dasharray="2 1"/><path d="M12 2v13" stroke="#a0a0a0" fill="none" stroke-dasharray="2 1"/><path d="M0.5 2l4 11l4-6l4 6l3-5" stroke="#a0a0a0" fill="none" stroke-width="1.3"/><path d="M9.5 6l2.5-2.5l2.5 2.5" stroke="#a0a0a0" fill="none"/></svg>
<svg style="left:476px;top:177px" width="18" height="18"><path d="M1 3.5h14" stroke="#a0a0a0" fill="none" stroke-dasharray="2 1"/><path d="M10 2v13" stroke="#a0a0a0" fill="none" stroke-dasharray="2 1"/><path d="M0.5 15l3-10l4 6l4-7l4 5" stroke="#a0a0a0" fill="none" stroke-width="1.3"/></svg>
<svg style="left:497px;top:177px" width="18" height="18"><path d="M1 3.5h6M1 14.5h6" stroke="#a0a0a0" fill="none" stroke-dasharray="2 1"/><path d="M11 2v13" stroke="#a0a0a0" fill="none" stroke-dasharray="2 1"/><path d="M5 9h10M7 6l-3 3l3 3M8 4.5h7M8 13.5h7" stroke="#a0a0a0" fill="none" stroke-width="1.2"/></svg>
<svg style="left:520px;top:177px" width="18" height="18"><rect x="0.5" y="6" width="5.5" height="9" rx="1.5" fill="#a0a0a0"/><rect x="8" y="6" width="5.5" height="9" rx="1.5" fill="#a0a0a0"/><rect x="1.5" y="2" width="3.5" height="5" fill="#a0a0a0"/><rect x="9" y="2" width="3.5" height="5" fill="#a0a0a0"/><rect x="5" y="8" width="4" height="3" fill="#a0a0a0"/><rect x="2" y="11" width="2.5" height="2.5" fill="#f0f0f0"/><rect x="9.5" y="11" width="2.5" height="2.5" fill="#f0f0f0"/></svg>
<svg style="left:541px;top:177px" width="18" height="18"><path d="M0.5 8.5h4v-5h5v5h4" stroke="#a0a0a0" fill="none" stroke-width="1.3"/><path d="M12 2v13" stroke="#a0a0a0" fill="none" stroke-dasharray="2 1"/><path d="M1 13.5h8M7 11l2.5 2.5L7 16" stroke="#a0a0a0" fill="none" stroke-width="1.2"/></svg>
<svg style="left:562px;top:177px" width="18" height="18"><path d="M15.5 8.5h-4v-5h-5v5h-4" stroke="#a0a0a0" fill="none" stroke-width="1.3"/><path d="M3 2v13" stroke="#a0a0a0" fill="none" stroke-dasharray="2 1"/><path d="M15 13.5h-8M9 11l-2.5 2.5L9 16" stroke="#a0a0a0" fill="none" stroke-width="1.2"/></svg>
<svg style="left:584px;top:177px" width="18" height="18"><text x="3.5" y="6" font-family="Liberation Sans" font-size="6" fill="#808080">(0,1)</text><path d="M0.5 15l5-5M4.5 12l3.5-4" fill="none" stroke="#808080" stroke-width="1.2"/><path d="M5.5 10.5l4 3.5h6" fill="none" stroke="#808080" stroke-width="1.2"/></svg>
<div class="v" style="left:608px;top:174px;height:26px;background:#a0a0a0"></div>
<div class="h" style="left:0px;top:200px;width:1280px;background:#a0a0a0"></div>
<div class="h" style="left:0px;top:201px;width:1280px;background:#fff"></div>
<div class="h" style="left:1px;top:206px;width:24px;background:#fff"></div>
<div class="h" style="left:1px;top:207px;width:24px;background:#a0a0a0"></div>
<div class="h" style="left:1px;top:209px;width:24px;background:#fff"></div>
<div class="h" style="left:1px;top:210px;width:24px;background:#a0a0a0"></div>
<div class="v" style="left:27px;top:203px;height:155px;background:#a0a0a0"></div>
<div class="h" style="left:0px;top:357px;width:28px;background:#a0a0a0"></div>
<svg style="left:4px;top:216px" width="17" height="17"><circle cx="11" cy="6.5" r="5" fill="#c4c4c4"/><path d="M7 6.5h8M11 2.5v8M8.5 3.5l5 6M13.5 3.5l-5 6" stroke="#e6e6e6" stroke-width="0.8"/><path d="M8 10.5l-4 3" stroke="#b8b8b8" stroke-width="1.6"/></svg>
<svg style="left:4px;top:241px" width="17" height="17"><path d="M5.5 1.5h8l2 2v11h-10z" fill="#e8e8e8" stroke="#b4b4b4"/><rect x="1.5" y="6.5" width="6" height="5" fill="#e8e8e8" stroke="#b4b4b4"/><path d="M8 5.5h5M9 8.5h2v3h3M9 12.5h5" fill="none" stroke="#b4b4b4"/></svg>
<svg style="left:4px;top:262px" width="17" height="17"><path d="M5.5 2.5h8l2 2v10h-10z" fill="#fff" stroke="#000" stroke-width="1.2"/><path d="M7 6.5h6M9 9.5h4M9 12h4" stroke="#000"/><rect x="1.5" y="7.5" width="6" height="5" fill="#fff" stroke="#000" stroke-width="1.3"/><path d="M7 13l3 3" stroke="#000" stroke-width="1.6"/></svg>
<svg style="left:4px;top:284px" width="17" height="17"><rect x="5" y="1" width="11" height="12" fill="#000"/><path d="M6 3.5h3v-1h3v1h3" stroke="#0f0" fill="none"/><rect x="6" y="5" width="9" height="7" fill="#00a0a0"/><path d="M6 9l3-3l3 3h3" stroke="#ff0" fill="none"/><circle cx="4.5" cy="8.5" r="3.3" fill="#0ff" stroke="#000" stroke-width="1.3"/><path d="M7 11l3 3" stroke="#000" stroke-width="1.6"/></svg>
<svg style="left:4px;top:311px" width="17" height="17"><rect x="3" y="1" width="13" height="13" fill="#0000c0"/><rect x="6" y="2" width="9" height="11" fill="#fff"/><path d="M7 4.5h7M8 7h6M8 9.5h6M7 12h7" stroke="#000"/><path d="M3 3l5 4.5l-5 4.5z" fill="#0000c0" stroke="#00c0c0"/></svg>
<svg style="left:4px;top:331px" width="17" height="17"><rect x="2" y="1" width="14" height="14" fill="#000"/><rect x="3" y="2" width="12" height="12" fill="#d0d000"/><path d="M4 4h3v3h2M9 3v4M12 3l1 2M4 10l3 2l2-2l3 3" stroke="#000" fill="none"/><circle cx="9" cy="9" r="2" fill="#fff" stroke="#000"/><circle cx="13" cy="5" r="1" fill="#f00"/></svg>
<div class="h" style="left:37px;top:209px;width:1236px;background:#fff"></div>
<div class="v" style="left:37px;top:209px;height:392px;background:#fff"></div>
<div class="h" style="left:37px;top:600px;width:1236px;background:#000"></div>
<div class="v" style="left:1272px;top:209px;height:392px;background:#000"></div>
<div class="h" style="left:42px;top:213px;width:1224px;background:#a0a0a0"></div>
<div class="v" style="left:42px;top:213px;height:381px;background:#a0a0a0"></div>
<div class="h" style="left:42px;top:593px;width:1225px;background:#fff"></div>
<div class="v" style="left:1266px;top:213px;height:381px;background:#fff"></div>
<div class="a" style="left:43px;top:214px;width:1223px;height:379px;background:#000;"></div>
<svg style="left:0;top:0" width="1280" height="719"><path d="M133.5 220.8V544" stroke="#c8c8c8" stroke-dasharray="3.2 2.55"/><path d="M156.5 220.8V544" stroke="#c8c8c8" stroke-dasharray="3.2 2.55"/><path d="M179.5 220.8V544" stroke="#c8c8c8" stroke-dasharray="3.2 2.55"/><path d="M202.5 220.8V544" stroke="#c8c8c8" stroke-dasharray="3.2 2.55"/><path d="M248.5 220.8V544" stroke="#c8c8c8" stroke-dasharray="3.2 2.55"/><path d="M271.5 220.8V544" stroke="#c8c8c8" stroke-dasharray="3.2 2.55"/><path d="M293.5 220.8V544" stroke="#c8c8c8" stroke-dasharray="3.2 2.55"/><path d="M316.5 220.8V544" stroke="#c8c8c8" stroke-dasharray="3.2 2.55"/><path d="M362.5 220.8V544" stroke="#c8c8c8" stroke-dasharray="3.2 2.55"/><path d="M385.5 220.8V544" stroke="#c8c8c8" stroke-dasharray="3.2 2.55"/><path d="M408.5 220.8V544" stroke="#c8c8c8" stroke-dasharray="3.2 2.55"/><path d="M431.5 220.8V544" stroke="#c8c8c8" stroke-dasharray="3.2 2.55"/><path d="M476.5 220.8V544" stroke="#c8c8c8" stroke-dasharray="3.2 2.55"/><path d="M499.5 220.8V544" stroke="#c8c8c8" stroke-dasharray="3.2 2.55"/><path d="M522.5 220.8V544" stroke="#c8c8c8" stroke-dasharray="3.2 2.55"/><path d="M545.5 220.8V544" stroke="#c8c8c8" stroke-dasharray="3.2 2.55"/><path d="M591.5 220.8V544" stroke="#c8c8c8" stroke-dasharray="3.2 2.55"/><path d="M614.5 220.8V544" stroke="#c8c8c8" stroke-dasharray="3.2 2.55"/><path d="M636.5 220.8V544" stroke="#c8c8c8" stroke-dasharray="3.2 2.55"/><path d="M659.5 220.8V544" stroke="#c8c8c8" stroke-dasharray="3.2 2.55"/><path d="M705.5 220.8V544" stroke="#c8c8c8" stroke-dasharray="3.2 2.55"/><path d="M728.5 220.8V544" stroke="#c8c8c8" stroke-dasharray="3.2 2.55"/><path d="M751.5 220.8V544" stroke="#c8c8c8" stroke-dasharray="3.2 2.55"/><path d="M774.5 220.8V544" stroke="#c8c8c8" stroke-dasharray="3.2 2.55"/><path d="M819.5 220.8V544" stroke="#c8c8c8" stroke-dasharray="3.2 2.55"/><path d="M842.5 220.8V544" stroke="#c8c8c8" stroke-dasharray="3.2 2.55"/><path d="M865.5 220.8V544" stroke="#c8c8c8" stroke-dasharray="3.2 2.55"/><path d="M888.5 220.8V544" stroke="#c8c8c8" stroke-dasharray="3.2 2.55"/><path d="M934.5 220.8V544" stroke="#c8c8c8" stroke-dasharray="3.2 2.55"/><path d="M957.5 220.8V544" stroke="#c8c8c8" stroke-dasharray="3.2 2.55"/><path d="M980.5 220.8V544" stroke="#c8c8c8" stroke-dasharray="3.2 2.55"/><path d="M1002.5 220.8V544" stroke="#c8c8c8" stroke-dasharray="3.2 2.55"/><path d="M1048.5 220.8V544" stroke="#c8c8c8" stroke-dasharray="3.2 2.55"/><path d="M1071.5 220.8V544" stroke="#c8c8c8" stroke-dasharray="3.2 2.55"/><path d="M1094.5 220.8V544" stroke="#c8c8c8" stroke-dasharray="3.2 2.55"/><path d="M1117.5 220.8V544" stroke="#c8c8c8" stroke-dasharray="3.2 2.55"/><path d="M1163.5 220.8V544" stroke="#c8c8c8" stroke-dasharray="3.2 2.55"/><path d="M1185.5 220.8V544" stroke="#c8c8c8" stroke-dasharray="3.2 2.55"/><path d="M1208.5 220.8V544" stroke="#c8c8c8" stroke-dasharray="3.2 2.55"/><path d="M1231.5 220.8V544" stroke="#c8c8c8" stroke-dasharray="3.2 2.55"/><path d="M111 517.5H1250" stroke="#c8c8c8" stroke-dasharray="3.2 2.55"/><path d="M111 490.5H1250" stroke="#c8c8c8" stroke-dasharray="3.2 2.55"/><path d="M111 463.5H1250" stroke="#c8c8c8" stroke-dasharray="3.2 2.55"/><path d="M111 409.5H1250" stroke="#c8c8c8" stroke-dasharray="3.2 2.55"/><path d="M111 382.5H1250" stroke="#c8c8c8" stroke-dasharray="3.2 2.55"/><path d="M111 356.5H1250" stroke="#c8c8c8" stroke-dasharray="3.2 2.55"/><path d="M111 302.5H1250" stroke="#c8c8c8" stroke-dasharray="3.2 2.55"/><path d="M111 275.5H1250" stroke="#c8c8c8" stroke-dasharray="3.2 2.55"/><path d="M111 248.5H1250" stroke="#c8c8c8" stroke-dasharray="3.2 2.55"/><path d="M225.5 221V549" stroke="#c8c8c8"/><path d="M339.5 221V549" stroke="#c8c8c8"/><path d="M453.5 221V549" stroke="#c8c8c8"/><path d="M568.5 221V549" stroke="#c8c8c8"/><path d="M682.5 221V549" stroke="#c8c8c8"/><path d="M797.5 221V549" stroke="#c8c8c8"/><path d="M911.5 221V549" stroke="#c8c8c8"/><path d="M1025.5 221V549" stroke="#c8c8c8"/><path d="M1140.5 221V549" stroke="#c8c8c8"/><path d="M105.4 329.5H1254" stroke="#c8c8c8"/><path d="M105.4 436.5H1254" stroke="#c8c8c8"/><path d="M1254.5 221V549M106 221.5H1255M106 544.5H1255" stroke="#c8c8c8"/><path d="M111 222V549" stroke="#8a8a8a" stroke-width="1.4"/><path d="M133.5 540V544" stroke="#c8c8c8"/><path d="M156.5 540V544" stroke="#c8c8c8"/><path d="M179.5 540V544" stroke="#c8c8c8"/><path d="M202.5 540V544" stroke="#c8c8c8"/><path d="M248.5 540V544" stroke="#c8c8c8"/><path d="M271.5 540V544" stroke="#c8c8c8"/><path d="M293.5 540V544" stroke="#c8c8c8"/><path d="M316.5 540V544" stroke="#c8c8c8"/><path d="M362.5 540V544" stroke="#c8c8c8"/><path d="M385.5 540V544" stroke="#c8c8c8"/><path d="M408.5 540V544" stroke="#c8c8c8"/><path d="M431.5 540V544" stroke="#c8c8c8"/><path d="M476.5 540V544" stroke="#c8c8c8"/><path d="M499.5 540V544" stroke="#c8c8c8"/><path d="M522.5 540V544" stroke="#c8c8c8"/><path d="M545.5 540V544" stroke="#c8c8c8"/><path d="M591.5 540V544" stroke="#c8c8c8"/><path d="M614.5 540V544" stroke="#c8c8c8"/><path d="M636.5 540V544" stroke="#c8c8c8"/><path d="M659.5 540V544" stroke="#c8c8c8"/><path d="M705.5 540V544" stroke="#c8c8c8"/><path d="M728.5 540V544" stroke="#c8c8c8"/><path d="M751.5 540V544" stroke="#c8c8c8"/><path d="M774.5 540V544" stroke="#c8c8c8"/><path d="M819.5 540V544" stroke="#c8c8c8"/><path d="M842.5 540V544" stroke="#c8c8c8"/><path d="M865.5 540V544" stroke="#c8c8c8"/><path d="M888.5 540V544" stroke="#c8c8c8"/><path d="M934.5 540V544" stroke="#c8c8c8"/><path d="M957.5 540V544" stroke="#c8c8c8"/><path d="M980.5 540V544" stroke="#c8c8c8"/><path d="M1002.5 540V544" stroke="#c8c8c8"/><path d="M1048.5 540V544" stroke="#c8c8c8"/><path d="M1071.5 540V544" stroke="#c8c8c8"/><path d="M1094.5 540V544" stroke="#c8c8c8"/><path d="M1117.5 540V544" stroke="#c8c8c8"/><path d="M1163.5 540V544" stroke="#c8c8c8"/><path d="M1185.5 540V544" stroke="#c8c8c8"/><path d="M1208.5 540V544" stroke="#c8c8c8"/><path d="M1231.5 540V544" stroke="#c8c8c8"/></svg>
<svg style="left:0;top:0" width="1280" height="719"><path d="M110.4,436.3 L116.1,432.1 L121.8,427.9 L127.6,423.8 L133.3,419.7 L139.0,415.7 L144.7,411.9 L150.4,408.2 L156.1,404.7 L161.9,401.4 L167.6,398.3 L173.3,395.4 L179.0,392.8 L184.7,390.4 L190.5,388.4 L196.2,386.6 L201.9,385.1 L207.6,384.0 L213.3,383.2 L219.0,382.7 L224.8,382.5 L230.5,382.7 L236.2,383.2 L241.9,384.0 L247.6,385.1 L253.3,386.6 L259.1,388.4 L264.8,390.4 L270.5,392.8 L276.2,395.4 L281.9,398.3 L287.7,401.4 L293.4,404.7 L299.1,408.2 L304.8,411.9 L310.5,415.7 L316.2,419.7 L322.0,423.8 L327.7,427.9 L333.4,432.1 L339.1,436.3 L344.8,440.6 L350.6,444.8 L356.3,448.9 L362.0,453.0 L367.7,456.9 L373.4,460.8 L379.1,464.5 L384.9,468.0 L390.6,471.3 L396.3,474.4 L402.0,477.3 L407.7,479.9 L413.5,482.2 L419.2,484.3 L424.9,486.1 L430.6,487.5 L436.3,488.7 L442.0,489.5 L447.8,490.0 L453.5,490.2 L459.2,490.0 L464.9,489.5 L470.6,488.7 L476.4,487.5 L482.1,486.1 L487.8,484.3 L493.5,482.2 L499.2,479.9 L504.9,477.3 L510.7,474.4 L516.4,471.3 L522.1,468.0 L527.8,464.5 L533.5,460.8 L539.2,456.9 L545.0,453.0 L550.7,448.9 L556.4,444.8 L562.1,440.6 L567.8,436.3 L573.6,432.1 L579.3,427.9 L585.0,423.8 L590.7,419.7 L596.4,415.7 L602.1,411.9 L607.9,408.2 L613.6,404.7 L619.3,401.4 L625.0,398.3 L630.7,395.4 L636.5,392.8 L642.2,390.4 L647.9,388.4 L653.6,386.6 L659.3,385.1 L665.0,384.0 L670.8,383.2 L676.5,382.7 L682.2,382.5 L687.9,382.7 L693.6,383.2 L699.4,384.0 L705.1,385.1 L710.8,386.6 L716.5,388.4 L722.2,390.4 L727.9,392.8 L733.7,395.4 L739.4,398.3 L745.1,401.4 L750.8,404.7 L756.5,408.2 L762.3,411.9 L768.0,415.7 L773.7,419.7 L779.4,423.8 L785.1,427.9 L790.8,432.1 L796.6,436.3 L802.3,440.6 L808.0,444.8 L813.7,448.9 L819.4,453.0 L825.1,456.9 L830.9,460.8 L836.6,464.5 L842.3,468.0 L848.0,471.3 L853.7,474.4 L859.5,477.3 L865.2,479.9 L870.9,482.2 L876.6,484.3 L882.3,486.1 L888.0,487.5 L893.8,488.7 L899.5,489.5 L905.2,490.0 L910.9,490.2 L916.6,490.0 L922.4,489.5 L928.1,488.7 L933.8,487.5 L939.5,486.1 L945.2,484.3 L950.9,482.2 L956.7,479.9 L962.4,477.3 L968.1,474.4 L973.8,471.3 L979.5,468.0 L985.3,464.5 L991.0,460.8 L996.7,456.9 L1002.4,453.0 L1008.1,448.9 L1013.8,444.8 L1019.6,440.6 L1025.3,436.3 L1031.0,432.1 L1036.7,427.9 L1042.4,423.8 L1048.2,419.7 L1053.9,415.7 L1059.6,411.9 L1065.3,408.2 L1071.0,404.7 L1076.7,401.4 L1082.5,398.3 L1088.2,395.4 L1093.9,392.8 L1099.6,390.4 L1105.3,388.4 L1111.0,386.6 L1116.8,385.1 L1122.5,384.0 L1128.2,383.2 L1133.9,382.7 L1139.6,382.5 L1145.4,382.7 L1151.1,383.2 L1156.8,384.0 L1162.5,385.1 L1168.2,386.6 L1173.9,388.4 L1179.7,390.4 L1185.4,392.8 L1191.1,395.4 L1196.8,398.3 L1202.5,401.4 L1208.3,404.7 L1214.0,408.2 L1219.7,411.9 L1225.4,415.7 L1231.1,419.7 L1236.8,423.8 L1242.6,427.9 L1248.3,432.1 L1254.0,436.3" fill="none" stroke="#ff5050" stroke-width="1"/><path d="M111,436 L112.5,441 L116.5,441 L116.5,432.5 L119,435 L125,434 L130,433.5 L170,429.5 L225,427.2 L280,429 L339,436 L352.6,399.6 L406.5,269.1 L424,239.6 L431,234 L446.5,222.9 L469,225.7 L476,231 L493.5,251.7 L502,269.8 L554,399.6 L561.3,417 L577,438.5 L589,433.3 L610,431.6 L673,427.2 L730,429 L796.3,436 L802.4,419.4 L852.1,287.6 L872,251.7 L894.6,226.7 L915.4,222.9 L939.8,237.8 L948.5,251.7 L962.4,272.6 L1005.2,379.7 L1025,436 L1038.5,438 L1047.3,432.9 L1106,428.4 L1140,427.6 L1200,430.5 L1246,435.6 L1254,436" fill="none" stroke="#48f048" stroke-width="1"/><rect x="111.5" y="442.5" width="6" height="6" fill="none" stroke="#48f048" stroke-width="1.2"/><rect x="235.5" y="425.5" width="6" height="6" fill="none" stroke="#48f048" stroke-width="1.2"/><rect x="350.5" y="397.5" width="6" height="6" fill="none" stroke="#48f048" stroke-width="1.2"/><rect x="403.5" y="266.5" width="6" height="6" fill="none" stroke="#48f048" stroke-width="1.2"/><rect x="499.5" y="267.5" width="6" height="6" fill="none" stroke="#48f048" stroke-width="1.2"/><rect x="551.5" y="397.5" width="6" height="6" fill="none" stroke="#48f048" stroke-width="1.2"/><rect x="670.5" y="424.5" width="6" height="6" fill="none" stroke="#48f048" stroke-width="1.2"/><rect x="799.5" y="416.5" width="6" height="6" fill="none" stroke="#48f048" stroke-width="1.2"/><rect x="849.5" y="285.5" width="6" height="6" fill="none" stroke="#48f048" stroke-width="1.2"/><rect x="945.5" y="249.5" width="6" height="6" fill="none" stroke="#48f048" stroke-width="1.2"/><rect x="1002.5" y="377.5" width="6" height="6" fill="none" stroke="#48f048" stroke-width="1.2"/><rect x="1103.5" y="425.5" width="6" height="6" fill="none" stroke="#48f048" stroke-width="1.2"/><rect x="1243.5" y="432.5" width="6" height="6" fill="none" stroke="#48f048" stroke-width="1.2"/><path d="M177.5 391.3L180.7 394.5L177.5 397.7L174.3 394.5Z" fill="none" stroke="#ff5050" stroke-width="1.1"/><path d="M310.5 413.3L313.7 416.5L310.5 419.7L307.3 416.5Z" fill="none" stroke="#ff5050" stroke-width="1.1"/><path d="M430.5 485.3L433.7 488.5L430.5 491.7L427.3 488.5Z" fill="none" stroke="#ff5050" stroke-width="1.1"/><path d="M559.5 440.3L562.7 443.5L559.5 446.7L556.3 443.5Z" fill="none" stroke="#ff5050" stroke-width="1.1"/><path d="M683.5 380.3L686.7 383.5L683.5 386.7L680.3 383.5Z" fill="none" stroke="#ff5050" stroke-width="1.1"/><path d="M808.5 443.3L811.7 446.5L808.5 449.7L805.3 446.5Z" fill="none" stroke="#ff5050" stroke-width="1.1"/><path d="M937.5 484.3L940.7 487.5L937.5 490.7L934.3 487.5Z" fill="none" stroke="#ff5050" stroke-width="1.1"/><path d="M1057.5 410.3L1060.7 413.5L1057.5 416.7L1054.3 413.5Z" fill="none" stroke="#ff5050" stroke-width="1.1"/><path d="M1190.5 393.3L1193.7 396.5L1190.5 399.7L1187.3 396.5Z" fill="none" stroke="#ff5050" stroke-width="1.1"/></svg>
<div class="t" style="right:1176px;top:216px;font-family:'Liberation Mono',monospace;font-size:13.2px;letter-spacing:-0.9px;color:#c8c8c8;text-shadow:0.4px 0 0 #c8c8c8">8.0V</div>
<div class="t" style="right:1176px;top:324px;font-family:'Liberation Mono',monospace;font-size:13.2px;letter-spacing:-0.9px;color:#c8c8c8;text-shadow:0.4px 0 0 #c8c8c8">4.0V</div>
<div class="t" style="right:1176px;top:431px;font-family:'Liberation Mono',monospace;font-size:13.2px;letter-spacing:-0.9px;color:#c8c8c8;text-shadow:0.4px 0 0 #c8c8c8">0V</div>
<div class="t" style="right:1176px;top:540px;font-family:'Liberation Mono',monospace;font-size:13.2px;letter-spacing:-0.9px;color:#c8c8c8;text-shadow:0.4px 0 0 #c8c8c8">-4.0V</div>
<div class="t" style="left:105px;top:553px;font-family:'Liberation Mono',monospace;font-size:13.2px;letter-spacing:-0.9px;color:#c8c8c8;text-shadow:0.4px 0 0 #c8c8c8">0s</div>
<div class="t" style="left:207.26px;top:553px;font-family:'Liberation Mono',monospace;font-size:13.2px;letter-spacing:-0.9px;color:#c8c8c8;text-shadow:0.4px 0 0 #c8c8c8">0.5us</div>
<div class="t" style="left:321.62px;top:553px;font-family:'Liberation Mono',monospace;font-size:13.2px;letter-spacing:-0.9px;color:#c8c8c8;text-shadow:0.4px 0 0 #c8c8c8">1.0us</div>
<div class="t" style="left:435.98px;top:553px;font-family:'Liberation Mono',monospace;font-size:13.2px;letter-spacing:-0.9px;color:#c8c8c8;text-shadow:0.4px 0 0 #c8c8c8">1.5us</div>
<div class="t" style="left:550.3399999999999px;top:553px;font-family:'Liberation Mono',monospace;font-size:13.2px;letter-spacing:-0.9px;color:#c8c8c8;text-shadow:0.4px 0 0 #c8c8c8">2.0us</div>
<div class="t" style="left:664.6999999999999px;top:553px;font-family:'Liberation Mono',monospace;font-size:13.2px;letter-spacing:-0.9px;color:#c8c8c8;text-shadow:0.4px 0 0 #c8c8c8">2.5us</div>
<div class="t" style="left:779.06px;top:553px;font-family:'Liberation Mono',monospace;font-size:13.2px;letter-spacing:-0.9px;color:#c8c8c8;text-shadow:0.4px 0 0 #c8c8c8">3.0us</div>
<div class="t" style="left:893.4199999999998px;top:553px;font-family:'Liberation Mono',monospace;font-size:13.2px;letter-spacing:-0.9px;color:#c8c8c8;text-shadow:0.4px 0 0 #c8c8c8">3.5us</div>
<div class="t" style="left:1007.78px;top:553px;font-family:'Liberation Mono',monospace;font-size:13.2px;letter-spacing:-0.9px;color:#c8c8c8;text-shadow:0.4px 0 0 #c8c8c8">4.0us</div>
<div class="t" style="left:1122.14px;top:553px;font-family:'Liberation Mono',monospace;font-size:13.2px;letter-spacing:-0.9px;color:#c8c8c8;text-shadow:0.4px 0 0 #c8c8c8">4.5us</div>
<div class="t" style="right:25px;top:553px;font-family:'Liberation Mono',monospace;font-size:13.2px;letter-spacing:-0.9px;color:#c8c8c8;text-shadow:0.4px 0 0 #c8c8c8">5.0us</div>
<svg style="left:112px;top:570px" width="8" height="8"><rect x="0.5" y="0.5" width="6" height="6" fill="none" stroke="#48f048" stroke-width="1.2"/></svg>
<div class="t" style="left:126px;top:567px;font-family:'Liberation Mono',monospace;font-size:13.2px;letter-spacing:-0.9px;color:#c8c8c8;text-shadow:0.4px 0 0 #c8c8c8">V(R4:1)</div>
<svg style="left:187px;top:570px" width="8" height="8"><path d="M3.5 0.3L6.7 3.5L3.5 6.7L0.3 3.5Z" fill="none" stroke="#ff5050" stroke-width="1.1"/></svg>
<div class="t" style="left:201px;top:567px;font-family:'Liberation Mono',monospace;font-size:13.2px;letter-spacing:-0.9px;color:#c8c8c8;text-shadow:0.4px 0 0 #c8c8c8">V(R3:2)</div>
<div class="t" style="left:669px;top:581px;font-family:'Liberation Mono',monospace;font-size:13.2px;letter-spacing:-0.9px;color:#c8c8c8;text-shadow:0.4px 0 0 #c8c8c8">Time</div>
<div class="h" style="left:127px;top:600px;width:1146px;background:#000"></div>
<div class="a" style="left:40px;top:600px;width:87px;height:23px;background:#f0f0f0;border-left:1px solid #fff;border-right:1px solid #222;border-bottom:1px solid #222;border-bottom-right-radius:2px;box-shadow:inset -1px -1px 0 #777"></div>
<div class="h" style="left:128px;top:601px;width:1144px;background:#fff"></div>
<div class="v" style="left:127px;top:601px;height:21px;background:#fff"></div>
<svg style="left:44px;top:603px" width="14" height="15"><path d="M0 0h10l3 3v12h-13z" fill="#000"/><path d="M1 3h2v-2h3v2h5" stroke="#0c0" fill="none" stroke-width="1.2"/><path d="M1 8l3 2h8" stroke="#0ee" fill="none"/><path d="M1 12l5-5l5 4" stroke="#ee0" fill="none"/></svg>
<div class="t" style="left:64px;top:606px;font-size:11px;letter-spacing:-0.3px">bias (active)</div>
<div class="h" style="left:0px;top:624px;width:1280px;background:#c8c8c8"></div>
<div class="h" style="left:0px;top:625px;width:1280px;background:#fff"></div>
<div class="h" style="left:0px;top:630px;width:1280px;background:#888"></div>
<div class="h" style="left:0px;top:631px;width:1280px;background:#fff"></div>
<div class="h" style="left:17px;top:634px;width:488px;background:#777"></div>
<div class="v" style="left:17px;top:634px;height:85px;background:#777"></div>
<div class="h" style="left:18px;top:635px;width:486px;background:#a0a0a0"></div>
<div class="v" style="left:18px;top:635px;height:84px;background:#a0a0a0"></div>
<div class="a" style="left:19px;top:636px;width:470px;height:83px;background:#fff;"></div>
<div class="a" style="left:489px;top:636px;width:15px;height:83px;background:#f0f0f0;"></div>
<div class="a" style="left:489px;top:670px;width:15px;height:44px;background:#cdcdcd;"></div>
<svg style="left:491px;top:640px" width="11" height="8"><path d="M2 6.5l3.5-3.5L9 6.5" fill="none" stroke="#404040" stroke-width="1.5"/></svg>
<div class="v" style="left:504px;top:634px;height:85px;background:#fff"></div>
<div class="a" style="left:5px;top:636px;width:10px;height:10px;border-top:1px solid #fff;border-left:1px solid #fff;border-right:1px solid #777;border-bottom:1px solid #777"></div>
<svg style="left:7px;top:638px" width="6" height="6"><path d="M0.5 0.5l5 5M5.5 0.5l-5 5" stroke="#000" stroke-width="1.3"/></svg>
<div class="a" style="left:5px;top:647px;width:10px;height:11px;border-top:1px solid #fff;border-left:1px solid #fff;border-right:1px solid #777;border-bottom:1px solid #777"></div>
<svg style="left:8px;top:650px" width="4" height="5"><path d="M3 0v5L0 2.5z" fill="#000"/></svg>
<div class="v" style="left:8px;top:660px;height:59px;background:#fff"></div>
<div class="v" style="left:9px;top:660px;height:59px;background:#a0a0a0"></div>
<div class="v" style="left:11px;top:660px;height:59px;background:#fff"></div>
<div class="v" style="left:12px;top:660px;height:59px;background:#a0a0a0"></div>
<div class="t" style="left:34px;top:637px;font-size:11px;letter-spacing:-0.45px">Reading and checking circuit</div>
<div class="t" style="left:34px;top:650px;font-size:11px;letter-spacing:-0.45px">Circuit read in and checked, no errors</div>
<div class="t" style="left:34px;top:663px;font-size:11px;letter-spacing:-0.45px">Calculating bias point for Transient Analysis</div>
<div class="t" style="left:34px;top:676px;font-size:11px;letter-spacing:-0.45px">Bias point calculated</div>
<div class="t" style="left:34px;top:689px;font-size:11px;letter-spacing:-0.45px">Transient Analysis</div>
<div class="t" style="left:34px;top:702px;font-size:11px;letter-spacing:-0.45px">Transient Analysis finished</div>
<div class="t" style="left:34px;top:715px;font-size:11px;letter-spacing:-0.45px">Simulation complete</div>
<div class="v" style="left:515px;top:632px;height:87px;background:#777"></div>
<div class="v" style="left:516px;top:632px;height:87px;background:#fff"></div>
<div class="a" style="left:520px;top:636px;width:10px;height:10px;border-top:1px solid #fff;border-left:1px solid #fff;border-right:1px solid #777;border-bottom:1px solid #777"></div>
<svg style="left:522px;top:638px" width="6" height="6"><path d="M0.5 0.5l5 5M5.5 0.5l-5 5" stroke="#000" stroke-width="1.3"/></svg>
<div class="a" style="left:520px;top:647px;width:10px;height:11px;border-top:1px solid #fff;border-left:1px solid #fff;border-right:1px solid #777;border-bottom:1px solid #777"></div>
<svg style="left:523px;top:650px" width="4" height="5"><path d="M3 0v5L0 2.5z" fill="#000"/></svg>
<div class="v" style="left:523px;top:660px;height:59px;background:#fff"></div>
<div class="v" style="left:524px;top:660px;height:59px;background:#a0a0a0"></div>
<div class="v" style="left:526px;top:660px;height:59px;background:#fff"></div>
<div class="v" style="left:527px;top:660px;height:59px;background:#a0a0a0"></div>
<div class="h" style="left:532px;top:634px;width:744px;background:#777"></div>
<div class="v" style="left:532px;top:634px;height:85px;background:#777"></div>
<div class="h" style="left:533px;top:635px;width:742px;background:#a0a0a0"></div>
<div class="v" style="left:533px;top:635px;height:84px;background:#a0a0a0"></div>
<div class="v" style="left:1275px;top:634px;height:85px;background:#fff"></div>
<div class="a" style="left:534px;top:636px;width:741px;height:83px;background:#f0f0f0;"></div>
<div class="h" style="left:538px;top:640px;width:732px;background:#696969"></div>
<div class="v" style="left:538px;top:640px;height:79px;background:#696969"></div>
<div class="h" style="left:539px;top:641px;width:731px;background:#a0a0a0"></div>
<div class="v" style="left:539px;top:641px;height:78px;background:#a0a0a0"></div>
<div class="v" style="left:1270px;top:640px;height:79px;background:#fff"></div>
<div class="a" style="left:540px;top:642px;width:730px;height:77px;background:#fff;"></div>
<div class="a" style="left:540px;top:642px;width:730px;height:13px;background:#f0f0f0;"></div>
<div class="h" style="left:540px;top:655px;width:730px;background:#a0a0a0"></div>
<div class="v" style="left:660px;top:642px;height:13px;background:#a0a0a0"></div>
<div class="v" style="left:661px;top:642px;height:13px;background:#fff"></div>
<div class="v" style="left:833px;top:642px;height:13px;background:#a0a0a0"></div>
<div class="v" style="left:834px;top:642px;height:13px;background:#fff"></div>
<div class="v" style="left:922px;top:642px;height:13px;background:#a0a0a0"></div>
<div class="v" style="left:923px;top:642px;height:13px;background:#fff"></div>
<div class="t" style="left:544px;top:684px;font-size:11px;letter-spacing:-0.45px">Time step =  3.472E-09</div>
<div class="t" style="left:668px;top:684px;font-size:11px;letter-spacing:-0.45px">Time =  5.000E-06</div>
<div class="t" style="left:841px;top:684px;font-size:11px;letter-spacing:-0.45px">End =  5.000E-06</div>
</body></html>
